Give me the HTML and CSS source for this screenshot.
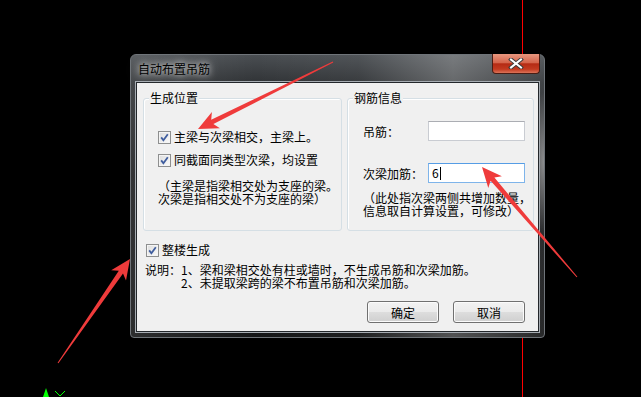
FILE: index.html
```html
<!DOCTYPE html>
<html lang="zh-CN">
<head>
    <meta charset="UTF-8">
    <title>自动布置吊筋</title>
    <link rel="stylesheet" href="styles.css">
</head>
<body>
    <svg class="cad" width="641" height="397">
        <line x1="522.5" y1="0" x2="522.5" y2="397" stroke="#ff0000" stroke-width="1"/>
        <polygon points="46,388 43,397 49,397" fill="#00ff00"/>
        <polyline points="55,391 60,396 65,391" fill="none" stroke="#00ff00" stroke-width="1"/>
    </svg>

    <div class="window">
        <div class="titlebar">
            <span class="title">自动布置吊筋</span>
            <span class="close">
                <svg width="16" height="11" viewBox="0 0 16 11">
                    <path d="M3 1.5 L13 9.5 M13 1.5 L3 9.5" stroke="#3b3b3b" stroke-width="4" stroke-linecap="square"/>
                    <path d="M3 1.5 L13 9.5 M13 1.5 L3 9.5" stroke="#ffffff" stroke-width="2" stroke-linecap="square"/>
                </svg>
            </span>
        </div>
        <div class="client">
            <div class="groups">
                <div class="group left">
                    <div class="group-title">生成位置</div>
                    <div class="check-row first">
                        <span class="checkbox"><svg width="13" height="13" viewBox="0 0 13 13"><path d="M3.2 6.4 L5.4 9.2 L9.8 3.2" fill="none" stroke="#3f5d9e" stroke-width="1.8"/></svg></span>
                        <span>主梁与次梁相交，主梁上。</span>
                    </div>
                    <div class="check-row second">
                        <span class="checkbox"><svg width="13" height="13" viewBox="0 0 13 13"><path d="M3.2 6.4 L5.4 9.2 L9.8 3.2" fill="none" stroke="#3f5d9e" stroke-width="1.8"/></svg></span>
                        <span>同截面同类型次梁，均设置</span>
                    </div>
                    <div class="note left-note">
                        <div>（主梁是指梁相交处为支座的梁。</div>
                        <div>次梁是指相交处不为支座的梁）</div>
                    </div>
                </div>
                <div class="group right">
                    <div class="group-title">钢筋信息</div>
                    <div class="field first">
                        <span class="label">吊筋：</span>
                        <span class="input"></span>
                    </div>
                    <div class="field second">
                        <span class="label">次梁加筋：</span>
                        <span class="input focus">6<span class="caret"></span></span>
                    </div>
                    <div class="note right-note">
                        <div>（此处指次梁两侧共增加数量，</div>
                        <div>信息取自计算设置，可修改）</div>
                    </div>
                </div>
            </div>
            <div class="check-row whole">
                <span class="checkbox"><svg width="13" height="13" viewBox="0 0 13 13"><path d="M3.2 6.4 L5.4 9.2 L9.8 3.2" fill="none" stroke="#3f5d9e" stroke-width="1.8"/></svg></span>
                <span>整楼生成</span>
            </div>
            <div class="desc">
                <div>说明：1、梁和梁相交处有柱或墙时，不生成吊筋和次梁加筋。</div>
                <div class="indent">2、未提取梁跨的梁不布置吊筋和次梁加筋。</div>
            </div>
            <div class="buttons">
                <button>确定</button>
                <button>取消</button>
            </div>
        </div>
    </div>

    <svg class="arrows" width="641" height="397">
        <polygon fill="#ef3b3b" points="198,129 219.9,128.2 213.4,124.1 333.2,62.4 332.8,61.6 211.2,119.7 211.9,112"/>
        <polygon fill="#ef3b3b" points="482,167 501.9,176.2 494.4,177.5 577.4,276.7 576.6,277.3 490.6,180.7 488.3,188"/>
        <polygon fill="#ef3b3b" points="130,259 126,280.5 123,273.6 58.4,363.3 57.6,362.7 118.8,270.8 111.2,270.3"/>
    </svg>
</body>
</html>
```

FILE: styles.css
```css
body {
    margin: 0;
    width: 641px;
    height: 397px;
    overflow: hidden;
    box-sizing: border-box;
    padding: 54px 0 0 130px;
    background-color: #000;
    font-family: "Noto Sans CJK SC", "DejaVu Sans", sans-serif;
    font-size: 12px;
    color: #000;
}
.cad {
    position: absolute;
    left: 0;
    top: 0;
}
.arrows {
    position: absolute;
    left: 0;
    top: 0;
    pointer-events: none;
}
.window {
    position: relative;
    width: 415px;
    box-sizing: border-box;
    border: 1px solid #6f7479;
    border-radius: 6px 6px 4px 4px;
    padding: 0 5px 5px;
    background:
        radial-gradient(ellipse 14px 70px at 100% 38%, rgba(255,255,255,0.45), rgba(255,255,255,0)),
        linear-gradient(to right, rgba(255,255,255,0.1) 0, rgba(255,255,255,0) 30%, rgba(255,255,255,0.04) 55%, rgba(255,255,255,0.26) 78%, rgba(255,255,255,0.08) 100%),
        linear-gradient(to bottom, #4a4e52 0, #303336 28px, #1c1d1f 120px, #151617 100%);
}
.titlebar {
    display: flex;
    height: 27px;
    margin: 0 -5px;
    padding-left: 7px;
}
.title {
    flex: 1;
    line-height: 27px;
    text-shadow: 0 0 6px rgba(255,255,255,0.9), 0 0 12px rgba(255,255,255,0.6);
}
.close {
    width: 48px;
    height: 20px;
    box-sizing: border-box;
    margin: -1px 4px 0 0;
    border: 1px solid #4a1d14;
    border-top: none;
    border-radius: 0 0 4px 4px;
    background: linear-gradient(#e8977f, #d5654c 45%, #b52b14 52%, #c23a20 80%, #dc7358);
    display: flex;
    align-items: center;
    justify-content: center;
}
.client {
    height: 250px;
    box-sizing: border-box;
    border: 1px solid #23272b;
    box-shadow: 0 0 0 1px #a6acb2;
    background-color: #f0f0f0;
    padding: 15px 0 0 6px;
}
.groups {
    display: flex;
    gap: 5px;
}
.group {
    height: 133px;
    box-sizing: border-box;
    border: 1px solid #d5dfe5;
    border-radius: 3px;
    box-shadow: inset 1px 1px 0 #fff;
}
.group.left {
    width: 199px;
    padding-left: 14px;
}
.group.right {
    width: 187px;
    padding-left: 15px;
}
.group-title {
    width: fit-content;
    margin-top: -8px;
    padding: 0 1px;
    line-height: 14px;
    background-color: #f0f0f0;
}
.group.left .group-title {
    margin-left: -9px;
}
.group.right .group-title {
    margin-left: -10px;
}
.check-row {
    display: flex;
    align-items: center;
    gap: 3px;
    height: 14px;
    line-height: 14px;
}
.check-row.first {
    margin-top: 25px;
}
.check-row.second {
    margin-top: 9px;
}
.checkbox {
    width: 13px;
    height: 13px;
    box-sizing: border-box;
    border: 1px solid #8e8f8f;
    background: linear-gradient(135deg, #dcdcdc, #fbfbfb);
    box-shadow: inset 0 0 0 1px #f4f4f4;
    display: flex;
    align-items: center;
    justify-content: center;
}
.checkbox svg {
    flex: none;
}
.note {
    white-space: nowrap;
}
.left-note {
    margin-top: 13px;
    line-height: 12.5px;
}
.right-note {
    margin-top: 8px;
    line-height: 13px;
}
.field {
    display: flex;
    align-items: center;
    height: 20px;
}
.field.first {
    margin-top: 16px;
}
.field.second {
    margin-top: 22px;
}
.label {
    width: 65px;
}
.input {
    width: 97px;
    height: 20px;
    box-sizing: border-box;
    border: 1px solid #c9ccd2;
    border-top-color: #abadb3;
    background-color: #fff;
    padding-left: 3px;
    line-height: 18px;
    display: flex;
    align-items: center;
}
.input.focus {
    border-color: #7eb4ea;
    border-top-color: #569de5;
}
.caret {
    width: 1px;
    height: 13px;
    background-color: #000;
    margin-left: 1px;
}
.check-row.whole {
    margin: 12px 0 0 3px;
}
.desc {
    margin: 7px 0 0 2px;
    line-height: 12.5px;
    white-space: nowrap;
}
.indent {
    padding-left: 36px;
}
.buttons {
    display: flex;
    justify-content: flex-end;
    gap: 14px;
    margin: 12px 13px 0 0;
}
button {
    width: 72px;
    height: 22px;
    padding: 0;
    border: 1px solid #707070;
    border-radius: 3px;
    background: linear-gradient(#f2f2f2, #ebebeb 48%, #dddddd 52%, #cfcfcf);
    box-shadow: inset 0 0 0 1px #fbfbfb;
    font-family: "Noto Sans CJK SC", "DejaVu Sans", sans-serif;
    font-size: 12px;
    color: #000;
}
```
